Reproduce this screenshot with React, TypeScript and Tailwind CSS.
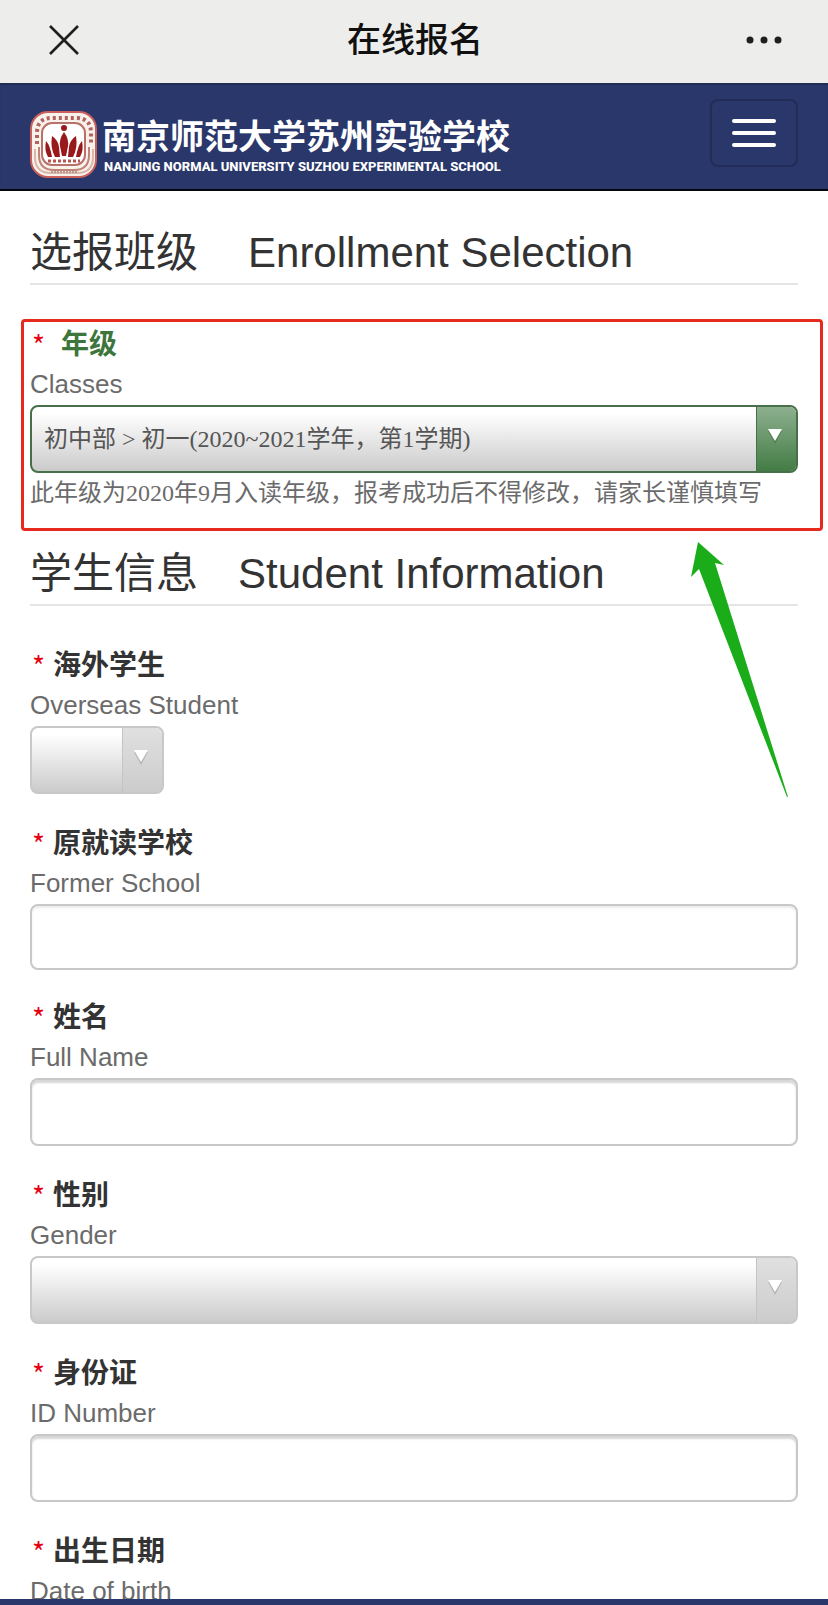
import React, { useState } from 'react';

const cjkSans = "font-['Liberation_Sans','Noto_Sans_CJK_SC',sans-serif]";
const cjkSerif = "font-['Liberation_Serif','Noto_Sans_CJK_SC',serif]";

interface FieldProps {
  id: string;
  label: string;
  sub: string;
  valid?: boolean;
  compact?: boolean;
  children: React.ReactNode;
}

const Field: React.FC<FieldProps> = ({ id, label, sub, valid, compact, children }) => (
  <div className={compact ? 'mb-7' : 'mb-[30px]'}>
    <label htmlFor={id} className="block">
      <span className={`flex items-center text-[28px] leading-[39px] ${valid ? 'gap-4 text-[#3c763d]' : 'gap-2 text-[#333]'}`}>
        <span className="pl-0.5 font-['Noto_Sans_CJK_SC',sans-serif] text-[#e60012]">*</span>
        <span className="font-bold">{label}</span>
      </span>
      <span className="block pb-px text-[26px] leading-10 text-[#6b6b6b]">{sub}</span>
    </label>
    {children}
  </div>
);

interface SelectBoxProps {
  id: string;
  options: string[];
  valid?: boolean;
  short?: boolean;
}

const SelectBox: React.FC<SelectBoxProps> = ({ id, options, valid, short }) => {
  const [value, setValue] = useState<string>(options[0]);

  return (
    <div className={`relative ${short ? 'w-[134px]' : 'w-full'}`}>
      <select
        id={id}
        value={value}
        onChange={(e) => setValue(e.target.value)}
        className={`block h-[68px] w-full appearance-none rounded-lg border-2 bg-linear-to-b from-white from-10% to-[#cbcbcb] pl-3 pr-12 text-2xl text-[#555] outline-none ${cjkSerif} ${valid ? 'border-[#47704a]' : 'border-[#c8c8c8]'}`}
      >
        {options.map((option) => (
          <option key={option} value={option}>{option}</option>
        ))}
      </select>
      <span
        className={`pointer-events-none absolute inset-y-0.5 right-0.5 flex w-10 justify-center rounded-r-md border-l bg-linear-to-b pt-[22px] pr-1 ${valid ? 'border-[#47704a] from-[#8db08f] to-[#437c45]' : 'border-[#c4c4c4] from-[#e0e0e0] to-[#cccccc]'}`}
      >
        <svg width="16" height="16" viewBox="0 0 16 16" aria-hidden="true">
          <path d="M1 2h14L8 15z" fill="#000" opacity="0.15" />
          <path d="M1 0h14L8 12z" fill="#fff" />
        </svg>
      </span>
    </div>
  );
};

const TextBox: React.FC<{ id: string; compact?: boolean }> = ({ id, compact }) => (
  <input
    id={id}
    type="text"
    className={`block w-full rounded-lg border-2 border-[#c8c8c8] bg-white px-3 text-2xl text-[#555] outline-none ${compact ? 'h-[66px] shadow-[inset_0_2px_2px_rgba(0,0,0,0.08)]' : 'h-[68px] shadow-[inset_0_3px_2px_rgba(0,0,0,0.16)]'}`}
  />
);

const SectionTitle: React.FC<{ children: React.ReactNode }> = ({ children }) => (
  <h2 className="mb-10 flex h-[65px] items-center border-b-2 border-[#e5e5e5] pt-0.5 text-[42px] leading-none text-[#333]">
    {children}
  </h2>
);

const SchoolBadge: React.FC = () => (
  <svg width="68" height="68" viewBox="0 0 68 68" className="shrink-0" aria-hidden="true">
    <rect x="1" y="1" width="65" height="65" rx="17" fill="#f9f1ec" stroke="#c9605c" strokeWidth="2" />
    <path d="M7 33V22Q7 7 22 7h24q15 0 15 15v11" fill="none" stroke="#98332f" strokeWidth="4" strokeDasharray="3 3" opacity="0.75" />
    <path d="M5 38v8q0 16 16 16h26q16 0 16-16v-8" fill="none" stroke="#d9b7aa" strokeWidth="2" />
    <path d="M9 36v8q0 15 15 15h20q15 0 15-15v-8" fill="none" stroke="#bf8478" strokeWidth="2" />
    <path d="M21 61h26" stroke="#b99a90" strokeWidth="2" strokeDasharray="2 1" />
    <rect x="12" y="12" width="43" height="42" rx="10" fill="#fff" stroke="#b97068" strokeWidth="2" />
    <g fill="#98181b">
      <circle cx="34" cy="17" r="3" />
      <path d="M34 21q5 7 4 14l-2 10h-4l-2-10q-1-7 4-14z" />
      <path d="M22 25q6 4 7 11l1 10h-5q-5-9-3-21zM46 25q-6 4-7 11l-1 10h5q5-9 3-21z" />
      <path d="M16 30q4 4 6 16h-4q-4-7-2-16zM52 30q-4 4-6 16h4q4-7 2-16z" />
    </g>
    <path d="M18 50h32" stroke="#b9554f" strokeWidth="3" strokeDasharray="3 2" />
  </svg>
);

export default function App() {
  return (
    <div className={`relative flex h-screen flex-col overflow-hidden bg-white ${cjkSans}`}>
      <header className="grid h-[83px] shrink-0 grid-cols-3 items-center bg-[#ededeb] pr-[46px] pb-1 pl-12">
        <button type="button" aria-label="关闭" className="justify-self-start">
          <svg width="32" height="32" viewBox="0 0 32 32" fill="none" stroke="#1f1f1f" strokeWidth="2.6" aria-hidden="true">
            <path d="M2 2l28 28M30 2L2 30" />
          </svg>
        </button>
        <h1 className="text-center text-[34px] font-medium leading-none text-[#111]">在线报名</h1>
        <button type="button" aria-label="更多" className="justify-self-end">
          <svg width="36" height="12" viewBox="0 0 36 12" fill="#1f1f1f" aria-hidden="true">
            <circle cx="4" cy="6" r="3.5" />
            <circle cx="18" cy="6" r="3.5" />
            <circle cx="32" cy="6" r="3.5" />
          </svg>
        </button>
      </header>

      <nav className="flex h-[108px] shrink-0 items-start justify-between border-b-2 border-[#05070f] bg-[#2a376b] px-[30px] pt-4 shadow-[inset_0_2px_1px_#232c52]">
        <a href="#" className="flex items-center gap-1 pt-3 text-white">
          <SchoolBadge />
          <span className="flex flex-col gap-1">
            <span className="text-[34px] font-bold leading-10 whitespace-nowrap">南京师范大学苏州实验学校</span>
            <span className="pl-0.5 font-['Roboto',sans-serif] text-[13px] font-extrabold leading-3 whitespace-nowrap">NANJING NORMAL UNIVERSITY SUZHOU EXPERIMENTAL SCHOOL</span>
          </span>
        </a>
        <button type="button" aria-label="菜单" className="flex h-[68px] w-[88px] flex-col items-center justify-center gap-2 rounded-lg border-2 border-[#222c57]">
          <span className="h-1 w-11 rounded-full bg-white"></span>
          <span className="h-1 w-11 rounded-full bg-white"></span>
          <span className="h-1 w-11 rounded-full bg-white"></span>
        </button>
      </nav>

      <main className="relative min-h-0 flex-1 overflow-y-auto px-[30px] pt-[29px] [scrollbar-width:none]">
        <SectionTitle>
          选报班级<span className="pl-[50px]">Enrollment Selection</span>
        </SectionTitle>

        <div className="relative">
          <Field id="grade" label="年级" sub="Classes" valid compact>
            <SelectBox id="grade" valid options={['初中部 > 初一(2020~2021学年，第1学期)']} />
            <p className={`text-2xl leading-10 whitespace-nowrap text-[#6b6b6b] ${cjkSerif}`}>
              此年级为2020年9月入读年级，报考成功后不得修改，请家长谨慎填写
            </p>
          </Field>
          {/* Highlight frame around the grade field */}
          <div className="pointer-events-none absolute -top-[6px] -right-[25px] -bottom-[18px] -left-[9px] rounded-sm border-[3px] border-[#e62b1e]"></div>
        </div>

        <SectionTitle>
          学生信息<span className="pl-10">Student Information</span>
        </SectionTitle>

        <Field id="overseas" label="海外学生" sub="Overseas Student">
          <SelectBox id="overseas" short options={['', '是', '否']} />
        </Field>
        <Field id="school" label="原就读学校" sub="Former School" compact>
          <TextBox id="school" compact />
        </Field>
        <Field id="name" label="姓名" sub="Full Name">
          <TextBox id="name" />
        </Field>
        <Field id="gender" label="性别" sub="Gender">
          <SelectBox id="gender" options={['', '男', '女']} />
        </Field>
        <Field id="id-number" label="身份证" sub="ID Number">
          <TextBox id="id-number" />
        </Field>
        <Field id="birth" label="出生日期" sub="Date of birth">
          <TextBox id="birth" />
        </Field>

        {/* Arrow pointing up at the highlighted field */}
        <svg className="pointer-events-none absolute top-[350px] right-[38px]" width="100" height="258" viewBox="0 0 100 258" aria-hidden="true">
          <path d="M8 1L34 24L25 22L98 256L97 256L9 28L1 36z" fill="#1aad19" />
        </svg>
      </main>

      <footer className="h-[6px] shrink-0 bg-[#2a376b]"></footer>
    </div>
  );
}
